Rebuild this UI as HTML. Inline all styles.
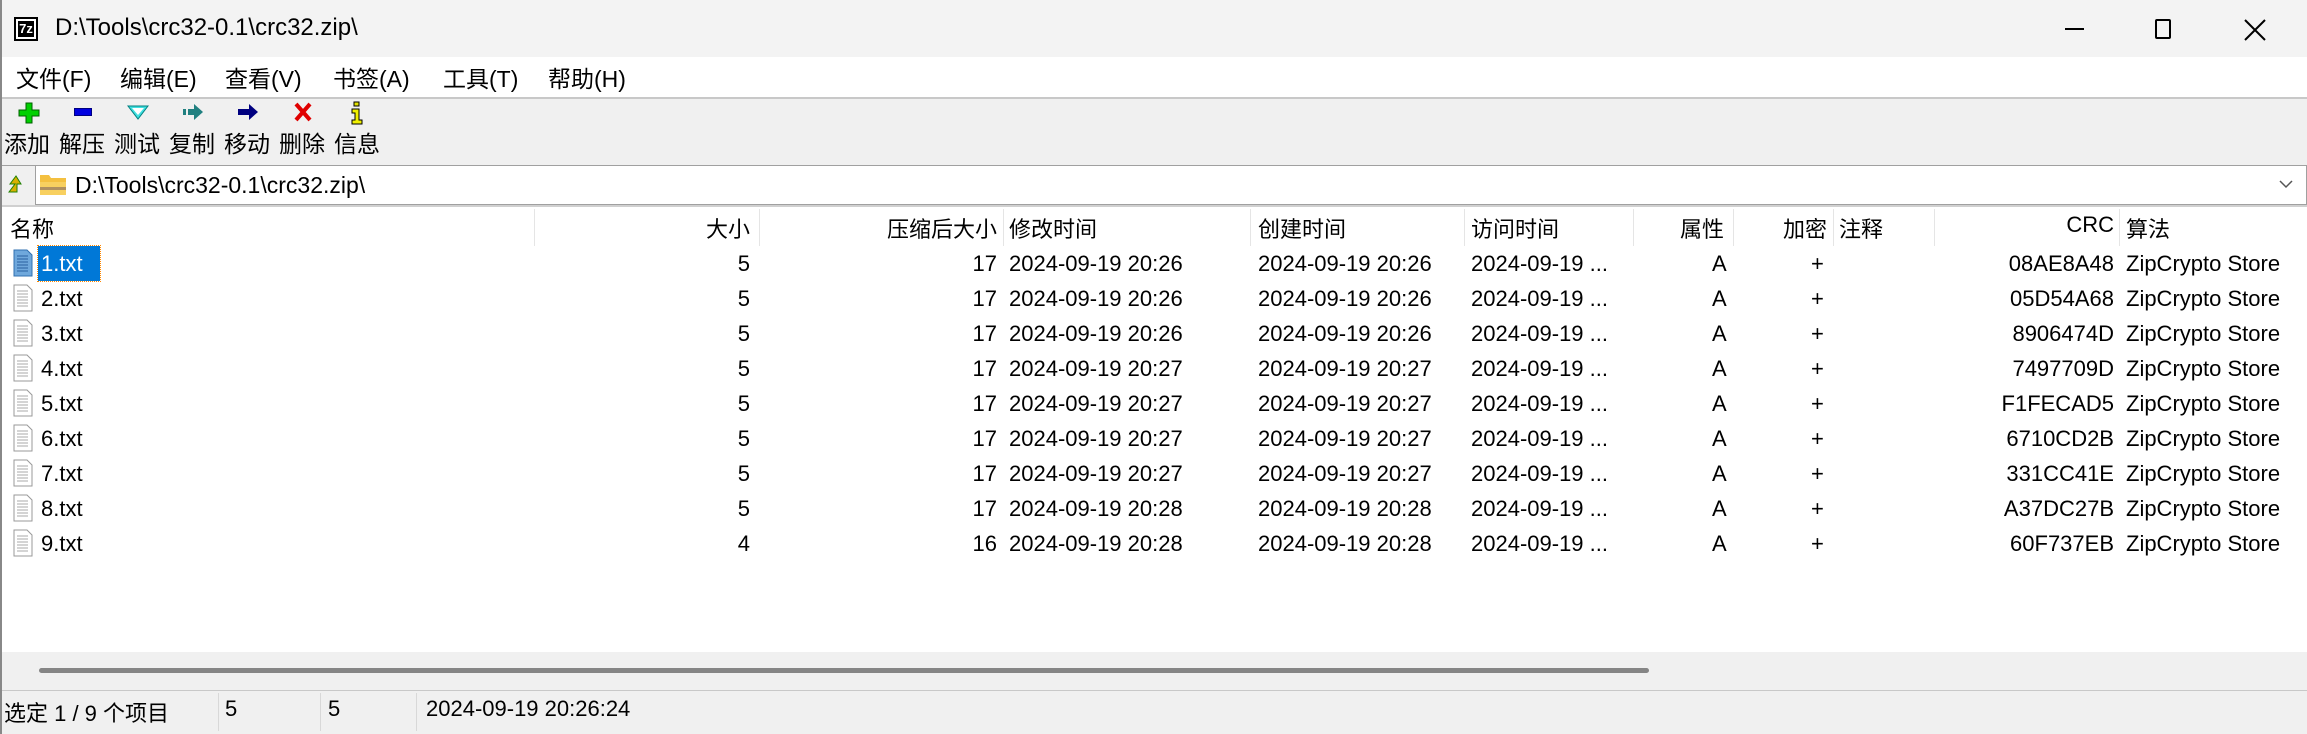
<!DOCTYPE html>
<html><head><meta charset="utf-8"><style>
*{margin:0;padding:0;box-sizing:border-box}
body{width:2307px;height:734px;overflow:hidden;background:#fff;font-family:"Liberation Sans","Noto Sans CJK SC",sans-serif;font-size:22px;color:#000;position:relative}
.a{position:absolute;white-space:nowrap}
.r{text-align:right}
.vl{position:absolute;top:209px;height:37px;width:1px;background:#e5e5e5}
.row{position:absolute;left:0;width:2307px;height:35px}
.row .a{top:5px}
.fi{position:absolute;left:13px;top:3px}
</style></head><body>
<div class="a" style="left:0;top:0;width:2307px;height:57px;background:#f3f3f3"></div>
<div class="a" style="left:14px;top:17px;width:24px;height:24px;border:2px solid #000;background:#fff"><div style="position:absolute;left:2px;top:2px;width:16px;height:16px;background:#000;color:#fff;font-size:13px;font-weight:bold;line-height:16px;text-align:center">7z</div></div>
<div class="a" style="left:55px;top:14px;font-size:24px">D:\Tools\crc32-0.1\crc32.zip\</div>
<div class="a" style="left:2065px;top:28px;width:19px;height:2px;background:#000"></div>
<div class="a" style="left:2155px;top:19px;width:16px;height:20px;border:2px solid #000;border-radius:2px"></div>
<svg class="a" style="left:2244px;top:19px" width="22" height="22"><path d="M1 1L21 21M21 1L1 21" stroke="#000" stroke-width="2"/></svg>
<div class="a" style="left:0;top:57px;width:2307px;height:40px;background:#fff"></div>
<div class="a" style="left:16px;top:60px;font-size:23px">文件(F)</div>
<div class="a" style="left:120px;top:60px;font-size:23px">编辑(E)</div>
<div class="a" style="left:225px;top:60px;font-size:23px">查看(V)</div>
<div class="a" style="left:333px;top:60px;font-size:23px">书签(A)</div>
<div class="a" style="left:443px;top:60px;font-size:23px">工具(T)</div>
<div class="a" style="left:548px;top:60px;font-size:23px">帮助(H)</div>
<div class="a" style="left:0;top:97px;width:2307px;height:2px;background:#c8c8c8"></div>
<div class="a" style="left:0;top:99px;width:2307px;height:66px;background:#f0f0f0"></div>
<svg class="a" style="left:18px;top:102px" width="22" height="22"><path d="M8 1h6v7h7v6h-7v7h-6v-7h-7v-6h7z" fill="#00d000" stroke="#006000"/></svg>
<div class="a" style="left:74px;top:108px;width:18px;height:8px;background:#0000e0;border:1px solid #000080"></div>
<svg class="a" style="left:127px;top:104px" width="22" height="16"><path d="M1 2h20L11 15z" fill="#40e0e0" stroke="#008080"/><path d="M5 4h12L11 11z" fill="#fff"/></svg>
<svg class="a" style="left:182px;top:103px" width="22" height="18"><rect x="1" y="6" width="3" height="6" fill="#208080"/><path d="M6 6h6V1l9 8-9 8v-5H6z" fill="#208080"/></svg>
<svg class="a" style="left:237px;top:103px" width="22" height="18"><path d="M1 6h11V1l9 8-9 8v-5H1z" fill="#000080"/></svg>
<svg class="a" style="left:294px;top:102px" width="18" height="20"><path d="M2 2L16 18M16 2L2 18" stroke="#e00000" stroke-width="4"/></svg>
<svg class="a" style="left:351px;top:101px" width="12" height="24"><rect x="3" y="1" width="5" height="4" fill="#e0e000" stroke="#000"/><path d="M1 8h7v11h3v4H1v-4h3v-7H1z" fill="#f0f000" stroke="#000"/></svg>
<div class="a" style="left:4px;top:125px;font-size:23px">添加</div>
<div class="a" style="left:59px;top:125px;font-size:23px">解压</div>
<div class="a" style="left:114px;top:125px;font-size:23px">测试</div>
<div class="a" style="left:169px;top:125px;font-size:23px">复制</div>
<div class="a" style="left:224px;top:125px;font-size:23px">移动</div>
<div class="a" style="left:279px;top:125px;font-size:23px">删除</div>
<div class="a" style="left:334px;top:125px;font-size:23px">信息</div>
<div class="a" style="left:0;top:165px;width:2307px;height:41px;background:#f0f0f0;border-top:1px solid #a0a0a0"></div>
<svg class="a" style="left:7px;top:174px" width="16" height="20"><path d="M2 18L8 10 3 10 9 2 14 10h-4v8z" fill="#d8b000" stroke="#208000"/></svg>
<div class="a" style="left:35px;top:165px;width:2272px;height:40px;background:#fff;border:1px solid #a0a0a0"></div>
<svg class="a" style="left:39px;top:172px" width="28" height="25"><path d="M1 3h9l2 3h15v17H1z" fill="#f4c040"/><rect x="1" y="10" width="26" height="13" fill="#f8d060"/><rect x="1" y="15" width="26" height="3" fill="#b09060"/></svg>
<div class="a" style="left:75px;top:172px;font-size:23px">D:\Tools\crc32-0.1\crc32.zip\</div>
<svg class="a" style="left:2279px;top:179px" width="14" height="10"><path d="M1 2l6 6 6-6" stroke="#555" fill="none" stroke-width="1.5"/></svg>
<div class="a" style="left:0;top:205px;width:2307px;height:2px;background:#d0d0d0"></div>
<div class="vl" style="left:534px"></div><div class="vl" style="left:759px"></div><div class="vl" style="left:1003px"></div><div class="vl" style="left:1250px"></div><div class="vl" style="left:1464px"></div><div class="vl" style="left:1633px"></div><div class="vl" style="left:1733px"></div><div class="vl" style="left:1833px"></div><div class="vl" style="left:1934px"></div><div class="vl" style="left:2119px"></div>
<div class="a" style="left:10px;top:212px">名称</div>
<div class="a r" style="left:600px;width:150px;top:212px">大小</div>
<div class="a r" style="left:800px;width:197px;top:212px">压缩后大小</div>
<div class="a" style="left:1009px;top:212px">修改时间</div>
<div class="a" style="left:1258px;top:212px">创建时间</div>
<div class="a" style="left:1471px;top:212px">访问时间</div>
<div class="a r" style="left:1640px;width:84px;top:212px">属性</div>
<div class="a r" style="left:1740px;width:87px;top:212px">加密</div>
<div class="a" style="left:1839px;top:212px">注释</div>
<div class="a r" style="left:1950px;width:164px;top:212px">CRC</div>
<div class="a" style="left:2126px;top:212px">算法</div>
<div id="rows"></div>
<div class="a" style="left:0;top:652px;width:2307px;height:38px;background:#f0f0f0"></div>
<div class="a" style="left:39px;top:668px;width:1610px;height:5px;border-radius:3px;background:#858585"></div>
<div class="a" style="left:0;top:690px;width:2307px;height:44px;background:#f0f0f0;border-top:1px solid #c8c8c8"></div>
<div class="a" style="left:218px;top:693px;width:1px;height:38px;background:#d8d8d8"></div>
<div class="a" style="left:320px;top:693px;width:1px;height:38px;background:#d8d8d8"></div>
<div class="a" style="left:416px;top:693px;width:1px;height:38px;background:#d8d8d8"></div>
<div class="a" style="left:4px;top:696px">选定 1 / 9 个项目</div>
<div class="a" style="left:225px;top:696px">5</div>
<div class="a" style="left:328px;top:696px">5</div>
<div class="a" style="left:426px;top:696px">2024-09-19 20:26:24</div>
<div class="a" style="left:0;top:0;width:2px;height:734px;background:#888"></div>
<script>
var d=[["1","5","17","20:26","08AE8A48"],["2","5","17","20:26","05D54A68"],["3","5","17","20:26","8906474D"],["4","5","17","20:27","7497709D"],["5","5","17","20:27","F1FECAD5"],["6","5","17","20:27","6710CD2B"],["7","5","17","20:27","331CC41E"],["8","5","17","20:28","A37DC27B"],["9","4","16","20:28","60F737EB"]];
var h="";
d.forEach(function(r,i){
var sel=i==0;
var ic='<svg class="fi" width="20" height="28"><path d="M1 1h13l5 5v21H1z" fill="'+(sel?'#6fa8dc':'#fff')+'" stroke="'+(sel?'#3070b0':'#999')+'"/><path d="M4 7h11M4 10h11M4 13h11M4 16h11M4 19h11M4 22h11" stroke="'+(sel?'#2a5f9f':'#aaa')+'"/></svg>';
var nm=sel?'<div class="a" style="left:38px;top:0;height:35px;width:62px;background:#0078d7;color:#fff;padding:5px 0 0 3px;outline:1px dotted #f80">'+r[0]+'.txt</div>':'<div class="a" style="left:41px">'+r[0]+'.txt</div>';
h+='<div class="row" style="top:'+(246+i*35)+'px">'+ic+nm+
'<div class="a r" style="left:600px;width:150px">'+r[1]+'</div>'+
'<div class="a r" style="left:800px;width:197px">'+r[2]+'</div>'+
'<div class="a" style="left:1009px">2024-09-19 '+r[3]+'</div>'+
'<div class="a" style="left:1258px">2024-09-19 '+r[3]+'</div>'+
'<div class="a" style="left:1471px">2024-09-19 ...</div>'+
'<div class="a" style="left:1712px">A</div>'+
'<div class="a" style="left:1811px">+</div>'+
'<div class="a r" style="left:1950px;width:164px">'+r[4]+'</div>'+
'<div class="a" style="left:2126px">ZipCrypto Store</div></div>';
});
document.getElementById("rows").innerHTML=h;
</script>
</body></html>
